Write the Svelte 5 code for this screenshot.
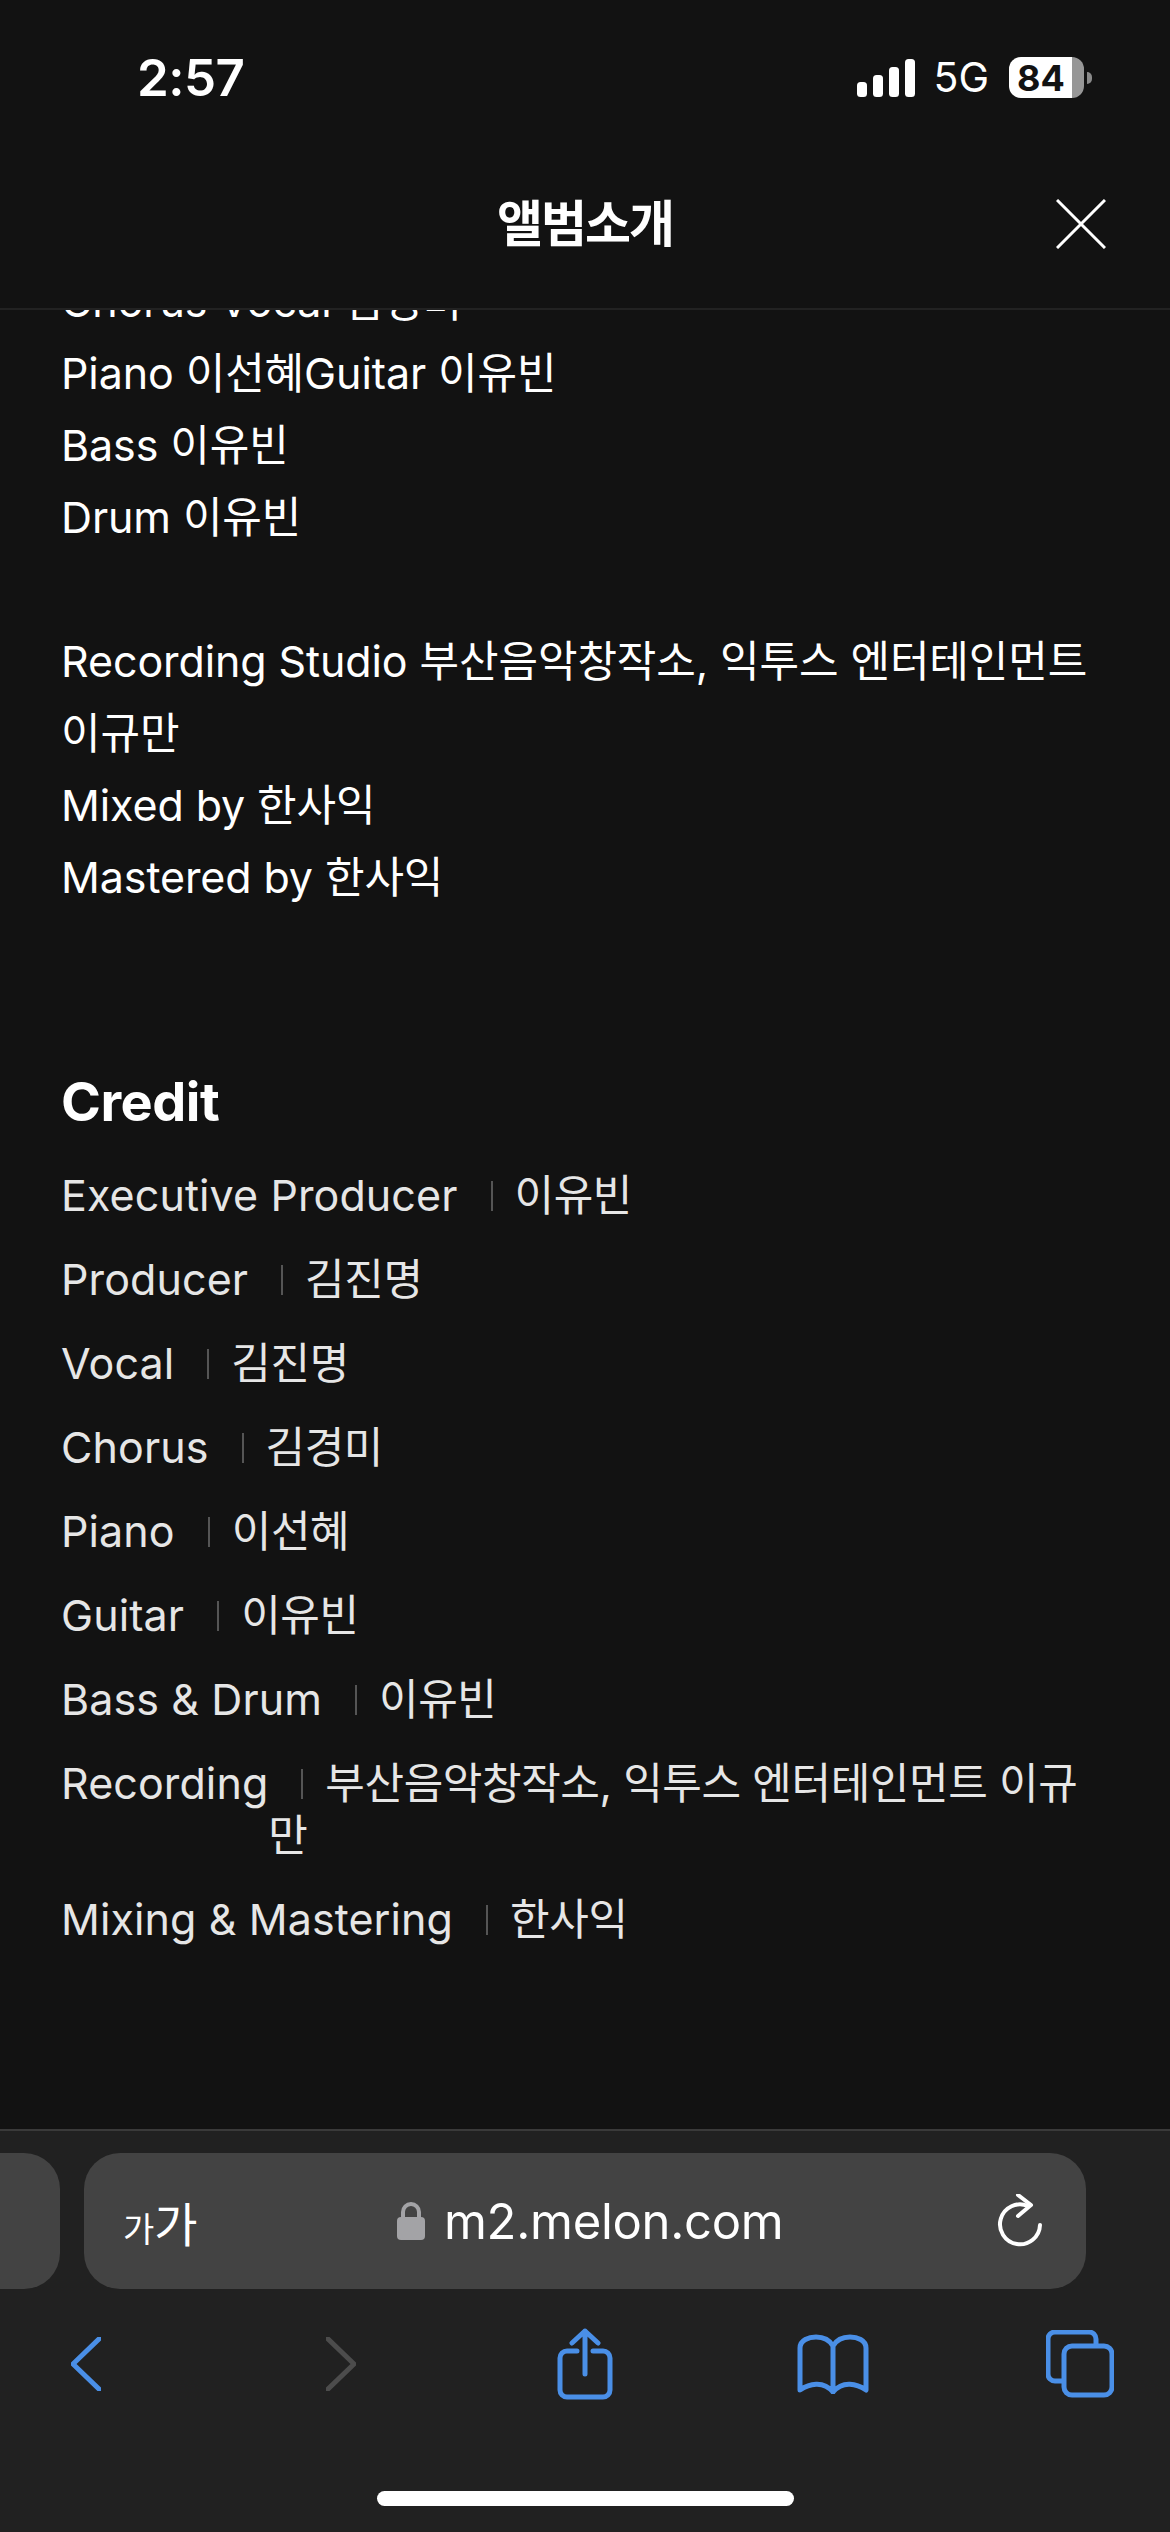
<script>
	const notes = [
		'Chorus Vocal 김경미',
		'Piano 이선혜Guitar 이유빈',
		'Bass 이유빈',
		'Drum 이유빈',
		'',
		'Recording Studio 부산음악창작소, 익투스 엔터테인먼트 이규만',
		'Mixed by 한사익',
		'Mastered by 한사익'
	];

	const credits = [
		{ role: 'Executive Producer', name: '이유빈' },
		{ role: 'Producer', name: '김진명' },
		{ role: 'Vocal', name: '김진명' },
		{ role: 'Chorus', name: '김경미' },
		{ role: 'Piano', name: '이선혜' },
		{ role: 'Guitar', name: '이유빈' },
		{ role: 'Bass & Drum', name: '이유빈' },
		{ role: 'Recording', name: '부산음악창작소, 익투스 엔터테인먼트 이규만' },
		{ role: 'Mixing & Mastering', name: '한사익' }
	];
</script>

<div class="page">
	<div class="status">
		<span class="time">2:57</span>
		<div class="status-right">
			<svg class="signal" width="58" height="38" viewBox="0 0 58 38">
				<rect x="0" y="23" width="10" height="15" rx="3.5" />
				<rect x="16" y="16" width="10" height="22" rx="3.5" />
				<rect x="32" y="8" width="10" height="30" rx="3.5" />
				<rect x="48" y="0" width="10" height="38" rx="3.5" />
			</svg>
			<span class="net">5G</span>
			<div class="battery">
				<div class="battery-body"><span>84</span></div>
				<div class="battery-nub"></div>
			</div>
		</div>
	</div>

	<header class="title-bar">
		<h1>앨범소개</h1>
		<svg class="close" width="50" height="50" viewBox="0 0 50 50">
			<path d="M1 1 L49 49 M49 1 L1 49" />
		</svg>
	</header>

	<main class="content">
		<div class="notes">
			{#each notes as line}
				<p>{line}</p>
			{/each}
		</div>

		<h2>Credit</h2>
		<ul class="credits">
			{#each credits as item}
				<li>
					<span class="role">{item.role}</span>
					<span class="name"><i class="sep"></i>{item.name}</span>
				</li>
			{/each}
		</ul>
	</main>

	<footer class="toolbar">
		<div class="tabs-row">
			<div class="prev-tab"></div>
			<div class="url-bar">
				<span class="aa"><small>가</small>가</span>
				<div class="address">
					<svg width="28" height="38" viewBox="0 0 28 38">
						<path class="shackle" d="M6 18 V10 a8 8 0 0 1 16 0 V18" />
						<rect x="0" y="15" width="28" height="23" rx="4" />
					</svg>
					<span>m2.melon.com</span>
				</div>
				<svg class="reload" width="46" height="54" viewBox="0 0 46 54">
					<path d="M32 12 A20 20 0 1 0 44 31" />
					<path d="M22 1 L35 11 L22 22" />
				</svg>
			</div>
		</div>

		<nav class="actions">
			<span class="slot">
				<svg width="30" height="54" viewBox="0 0 30 54" class="blue">
					<path d="M29 1 L2 27 L29 53" />
				</svg>
			</span>
			<span class="slot">
				<svg width="30" height="54" viewBox="0 0 30 54" class="grey">
					<path d="M1 1 L28 27 L1 53" />
				</svg>
			</span>
			<span class="slot">
				<svg width="56" height="72" viewBox="0 0 56 72" class="blue">
					<path d="M20 23 H10 a7 7 0 0 0 -7 7 V62 a7 7 0 0 0 7 7 H46 a7 7 0 0 0 7 -7 V30 a7 7 0 0 0 -7 -7 H36" />
					<path d="M28 46 V3 M15 15 L28 3 L41 15" />
				</svg>
			</span>
			<span class="slot">
				<svg width="72" height="60" viewBox="0 0 72 60" class="blue">
					<path d="M36 12 C32 5 25 3 19 3 C12 3 3 6 3 14 V56 C12 50 26 46 36 58 C46 46 60 50 69 56 V14 C69 6 60 3 53 3 C47 3 40 5 36 12 Z M36 12 V58" />
				</svg>
			</span>
			<span class="slot">
				<svg width="68" height="68" viewBox="0 0 68 68" class="blue">
					<path d="M50 15 V9 a7 7 0 0 0 -7 -7 H9 a7 7 0 0 0 -7 7 V44 a7 7 0 0 0 7 7 H17" />
					<rect x="18" y="16" width="48" height="49" rx="8" />
				</svg>
			</span>
		</nav>

		<div class="home-bar"></div>
	</footer>
</div>

<style>
	:global(body) {
		background: #121212;
	}

	.page {
		width: 1170px;
		height: 2532px;
		display: flex;
		flex-direction: column;
		overflow: hidden;
		background: #121212;
		color: #fff;
		font-family: Inter, "Noto Sans CJK KR", sans-serif;
	}

	.status {
		height: 155px;
		flex: none;
		display: flex;
		justify-content: space-between;
		align-items: flex-start;
		padding: 48px 78px 0 137px;
		box-sizing: border-box;
	}

	.time {
		font-size: 51px;
		line-height: 60px;
		font-weight: 600;
		letter-spacing: -0.5px;
	}

	.status-right {
		display: flex;
		align-items: center;
		padding-top: 9px;
	}

	.signal {
		fill: #fff;
		margin-right: 18px;
	}

	.net {
		font-size: 41px;
		line-height: 41px;
		margin-right: 20px;
	}

	.battery {
		display: flex;
		align-items: center;
		gap: 3px;
	}

	.battery-body {
		width: 75px;
		height: 41px;
		border-radius: 12px;
		display: flex;
		align-items: center;
		padding-left: 8px;
		box-sizing: border-box;
		background: linear-gradient(to right, #fff 63px, #979797 63px);
	}

	.battery-body span {
		font-size: 36px;
		font-weight: 700;
		color: #121212;
		line-height: 36px;
	}

	.battery-nub {
		width: 5px;
		height: 12px;
		border-radius: 0 6px 6px 0;
		background: #8a8a8a;
	}

	.title-bar {
		height: 155px;
		flex: none;
		position: relative;
		display: flex;
		align-items: center;
		justify-content: center;
		padding-bottom: 24px;
		box-sizing: border-box;
		border-bottom: 2px solid #222;
		z-index: 1;
	}

	h1 {
		margin: 0;
		font-size: 50px;
		font-weight: 700;
		letter-spacing: -2px;
	}

	.close {
		position: absolute;
		left: 1056px;
		top: 44px;
	}

	.close path {
		fill: none;
		stroke: #fff;
		stroke-width: 3;
	}

	.content {
		flex: 1;
		min-height: 0;
		overflow: hidden;
		padding: 0 61px;
	}

	.notes {
		margin-top: -45px;
		font-size: 43px;
		line-height: 72px;
		letter-spacing: -0.1px;
	}

	.notes p {
		margin: 0;
		min-height: 72px;
	}

	h2 {
		margin: 156px 0 0;
		font-size: 54px;
		line-height: 66px;
		font-weight: 700;
		letter-spacing: -0.5px;
	}

	.credits {
		list-style: none;
		margin: 34px 0 0;
		padding: 0;
		display: flex;
		flex-direction: column;
		gap: 32px;
		font-size: 43px;
		line-height: 52px;
		color: #e6e6e6;
	}

	.credits li {
		display: flex;
	}

	.role {
		flex: none;
		letter-spacing: 0.1px;
	}

	.name {
		letter-spacing: -0.4px;
	}

	.sep {
		display: inline-block;
		width: 2px;
		height: 30px;
		background: #555;
		margin: 0 22px 0 33px;
	}

	.toolbar {
		height: 403px;
		flex: none;
		background: #212121;
		border-top: 2px solid #3a3a3a;
		box-sizing: border-box;
		display: flex;
		flex-direction: column;
	}

	.tabs-row {
		display: flex;
		gap: 24px;
		margin-top: 22px;
		height: 136px;
	}

	.prev-tab {
		width: 60px;
		background: #434343;
		border-radius: 0 36px 36px 0;
	}

	.url-bar {
		width: 1002px;
		background: #434343;
		border-radius: 36px;
		display: flex;
		align-items: center;
		justify-content: space-between;
		padding: 0 44px 0 39px;
		box-sizing: border-box;
		position: relative;
	}

	.aa {
		font-size: 47px;
		letter-spacing: 0;
	}

	.aa small {
		font-size: 34px;
	}

	.address {
		display: flex;
		align-items: center;
		gap: 19px;
		font-size: 49px;
		letter-spacing: -0.3px;
		position: absolute;
		left: 313px;
	}

	.address svg {
		fill: #a3a3a6;
	}

	.shackle {
		fill: none;
		stroke: #a3a3a6;
		stroke-width: 4;
	}

	.reload path {
		fill: none;
		stroke: #fff;
		stroke-width: 4;
		stroke-linecap: round;
		stroke-linejoin: round;
	}

	.actions {
		display: grid;
		grid-template-columns: 254.5px 244.5px 247.5px 247.5px 72px;
		align-items: center;
		padding-left: 50px;
		margin-top: 39px;
		height: 72px;
	}

	.slot {
		width: 72px;
		display: flex;
		justify-content: center;
	}

	.actions svg {
		fill: none;
		stroke-width: 5;
		stroke-linecap: round;
		stroke-linejoin: round;
	}

	.blue {
		stroke: #4a8fe7;
	}

	.grey {
		stroke: #4c4c4c;
	}

	.home-bar {
		width: 417px;
		height: 15px;
		border-radius: 8px;
		background: #fff;
		margin: 91px auto 0;
	}
</style>
